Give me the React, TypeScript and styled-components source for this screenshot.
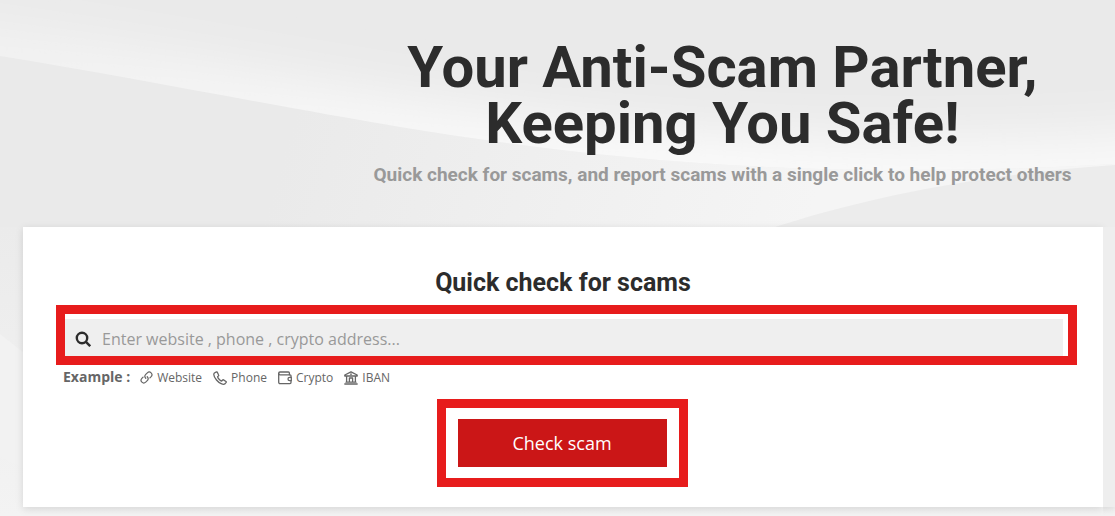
import React from "react";
import styled, { createGlobalStyle } from "styled-components";

const GlobalStyle = createGlobalStyle`
  * { box-sizing: border-box; }
  body {
    margin: 0;
    background: #ebebeb;
    font-family: "Open Sans", "Noto Sans", sans-serif;
    color: #2c2c2c;
  }
  h1, h2, p, ul { margin: 0; padding: 0; }
`;

const Hero = styled.main`
  position: relative;
  isolation: isolate;
  overflow: hidden;
  min-height: 100vh;
  padding-top: 39px;
  padding-bottom: 9px;
`;

const Backdrop = styled.svg`
  position: absolute;
  inset: 0;
  z-index: -1;
  width: 100%;
  height: 100%;
`;

const Intro = styled.header`
  padding-left: 330px;
  text-align: center;
  font-family: Roboto, "Liberation Sans", sans-serif;
  font-weight: 700;
`;

const Title = styled.h1`
  font-size: 58px;
  line-height: 56px;
  white-space: nowrap;
`;

const Tagline = styled.p`
  margin-top: 12px;
  font-size: 19px;
  line-height: 24px;
  color: #999999;
  white-space: nowrap;
`;

const Panels = styled.div`
  display: flex;
  margin-top: 40px;
  padding-left: 23px;
`;

const CheckCard = styled.form`
  display: flex;
  flex-direction: column;
  flex: 1;
  min-width: 0;
  padding: 40px;
  background: #ffffff;
  box-shadow: 0 2px 8px rgba(0, 0, 0, 0.12);
`;

const NextPanel = styled.aside`
  flex: 0 0 12px;
  background: #eeeeee;
  box-shadow: 0 2px 8px rgba(0, 0, 0, 0.12);
  clip-path: inset(0 0 -12px 0);
`;

const CardTitle = styled.h2`
  margin-bottom: 20px;
  font-family: Roboto, "Liberation Sans", sans-serif;
  font-size: 25px;
  font-weight: 700;
  line-height: 32px;
  text-align: center;
`;

const Highlight = styled.div<{ $inset: string }>`
  position: relative;
  &::after {
    content: "";
    position: absolute;
    inset: ${(p) => p.$inset};
    border: 9px solid #e71c1c;
    pointer-events: none;
  }
`;

const SearchField = styled.label`
  display: flex;
  align-items: center;
  gap: 11px;
  height: 40px;
  padding: 0 12px;
  background: #efefef;
`;

const SearchInput = styled.input`
  flex: 1;
  min-width: 0;
  height: 40px;
  padding: 0;
  border: 0;
  outline: 0;
  background: transparent;
  font: inherit;
  font-size: 16px;
  color: #2c2c2c;
  &::placeholder { color: #999999; opacity: 1; }
`;

const Examples = styled.div`
  display: flex;
  align-items: center;
  margin-top: 8px;
  height: 20px;
  color: #666666;
  line-height: 20px;
`;

const ExampleLabel = styled.strong`
  margin-right: 10px;
  font-size: 14px;
`;

const ExampleList = styled.ul`
  display: flex;
  gap: 11px;
  padding-top: 1px;
  list-style: none;
  font-size: 12px;
`;

const ExampleItem = styled.li`
  display: flex;
  align-items: center;
  gap: 4px;
`;

const ExampleIcon = styled.svg<{ $size: number }>`
  width: ${(p) => p.$size}px;
  height: ${(p) => p.$size}px;
  fill: none;
  stroke: currentColor;
  stroke-width: 1.3;
  stroke-linecap: round;
  stroke-linejoin: round;
`;

const Actions = styled.div`
  display: flex;
  justify-content: center;
  margin-top: 32px;
  padding-right: 2px;
`;

const CheckButton = styled.button`
  display: block;
  width: 209px;
  height: 48px;
  border: 0;
  background: #cb1617;
  color: #ffffff;
  font: inherit;
  font-size: 18px;
`;

const SearchIcon = () => (
  <svg width="16" height="16" viewBox="0 0 16 16" fill="none" stroke="#2c2c2c" strokeWidth="2.4" aria-hidden="true">
    <circle cx="7" cy="7" r="5.2" />
    <path d="M10.7 10.7 L15.2 15.2" />
  </svg>
);

const examples: { name: string; size: number; icon: React.ReactNode }[] = [
  {
    name: "Website",
    size: 13,
    icon: (
      <>
        <path d="M6.200 7.800C4.900 6.500 4.900 5 6.200 3.700L7.900 2A2.900 2.900 0 0 1 12 6.100L10.700 7.400" />
        <path d="M7.800 6.200C9.100 7.500 9.100 9 7.800 10.300L6.100 12A2.900 2.900 0 0 1 2 7.900L3.300 6.600" />
      </>
    ),
  },
  {
    name: "Phone",
    size: 14,
    icon: (
      <path d="M3.4 .9 L1.4 2 C.4 3 .8 5.6 3.5 9 C6.4 12.5 10.3 14 11.9 12.9 L13.2 11.4 C13.4 11.1 13.3 10.7 13 10.5 L10.5 8.9 C10.2 8.7 9.8 8.8 9.6 9 L8.7 10 C7.4 9.7 5 7.5 4.6 5.8 L5.5 4.9 C5.8 4.6 5.8 4.3 5.6 4 L4.3 1.2 C4.1 .8 3.7 .7 3.4 .9 Z" />
    ),
  },
  {
    name: "Crypto",
    size: 14,
    icon: (
      <>
        <path d="M11.400 3.800V2a1 1 0 0 0-1-1H2a1.300 1.300 0 0 0-1.300 1.300V11.300A1.300 1.300 0 0 0 2 12.600H12a1 1 0 0 0 1-1V9.600" />
        <path d="M.7 2.500A1.300 1.300 0 0 0 2 3.800H12a1 1 0 0 1 1 1V6.400" />
        <path d="M13.300 6.400H11.600a1.600 1.600 0 0 0 0 3.200H13.300Z" />
      </>
    ),
  },
  {
    name: "IBAN",
    size: 14,
    icon: (
      <>
        <path d="M.8 5V4L7 .8L13.2 4V5ZM.8 13H13.2M2 11.200H12M2.600 5V11M5.400 7V11M8.600 7V11M11.400 5V11M5.400 7H8.600" />
        <circle cx="7" cy="3.2" r=".3" />
      </>
    ),
  },
];

const Scenery = () => (
  <Backdrop viewBox="0 0 1115 516" preserveAspectRatio="none" aria-hidden="true">
    <defs>
      <linearGradient id="glow" gradientUnits="userSpaceOnUse" x1="0" y1="0" x2="1115" y2="0">
        <stop offset="0" stopColor="#ffffff" stopOpacity="0.4" />
        <stop offset="0.3" stopColor="#ffffff" stopOpacity="0.65" />
        <stop offset="0.6" stopColor="#ffffff" stopOpacity="0.85" />
        <stop offset="1" stopColor="#ffffff" stopOpacity="0.75" />
      </linearGradient>
      <linearGradient id="lower" gradientUnits="userSpaceOnUse" x1="300" y1="100" x2="800" y2="250">
        <stop offset="0" stopColor="#eaeaea" />
        <stop offset="1" stopColor="#f5f5f5" />
      </linearGradient>
      <linearGradient id="floor" x1="0" y1="0" x2="0" y2="1">
        <stop offset="0" stopColor="#ebebeb" />
        <stop offset="1" stopColor="#f3f3f3" />
      </linearGradient>
      <filter id="soften" filterUnits="userSpaceOnUse" x="-200" y="-100" width="1500" height="500">
        <feGaussianBlur stdDeviation="26" />
      </filter>
      <clipPath id="sky">
        <path d="M0 -30V56C130 77 280 107 400 127C540 150 700 170 900 170C980 170 1050 168 1115 164V-30Z" />
      </clipPath>
    </defs>
    <rect width="1115" height="516" fill="#eaeaea" />
    <rect width="1115" height="256" fill="url(#lower)" />
    <g clipPath="url(#sky)">
      <rect width="1115" height="200" fill="#eaeaea" />
      <path
        d="M-100 46L0 62C130 83 280 113 400 133C540 156 700 176 900 176C980 176 1050 174 1115 170L1215 160"
        fill="none"
        stroke="url(#glow)"
        strokeWidth="70"
        filter="url(#soften)"
      />
    </g>
    <path d="M775 227C850 203 960 176 1115 165V227Z" fill="#ececec" />
    <rect y="227" width="1115" height="289" fill="url(#floor)" />
    <path d="M0 334L23 352V468L0 457Z" fill="#f2f2f2" />
  </Backdrop>
);

export default function App() {
  return (
    <>
      <GlobalStyle />
      <Hero>
        <Scenery />
        <Intro>
          <Title>
            Your Anti-Scam Partner,
            <br />
            Keeping You Safe!
          </Title>
          <Tagline>Quick check for scams, and report scams with a single click to help protect others</Tagline>
        </Intro>
        <Panels>
          <CheckCard onSubmit={(e) => e.preventDefault()}>
            <CardTitle>Quick check for scams</CardTitle>
            <Highlight $inset="-14px -14px -6px -7px">
              <SearchField>
                <SearchIcon />
                <SearchInput
                  type="text"
                  aria-label="Website, phone or crypto address"
                  placeholder="Enter website , phone , crypto address..."
                />
              </SearchField>
            </Highlight>
            <Examples>
              <ExampleLabel>Example :</ExampleLabel>
              <ExampleList>
                {examples.map(({ name, size, icon }) => (
                  <ExampleItem key={name}>
                    <ExampleIcon $size={size} viewBox="0 0 14 14" aria-hidden="true">
                      {icon}
                    </ExampleIcon>
                    {name}
                  </ExampleItem>
                ))}
              </ExampleList>
            </Examples>
            <Actions>
              <Highlight $inset="-20px -21px">
                <CheckButton type="submit">Check scam</CheckButton>
              </Highlight>
            </Actions>
          </CheckCard>
          <NextPanel />
        </Panels>
      </Hero>
    </>
  );
}
